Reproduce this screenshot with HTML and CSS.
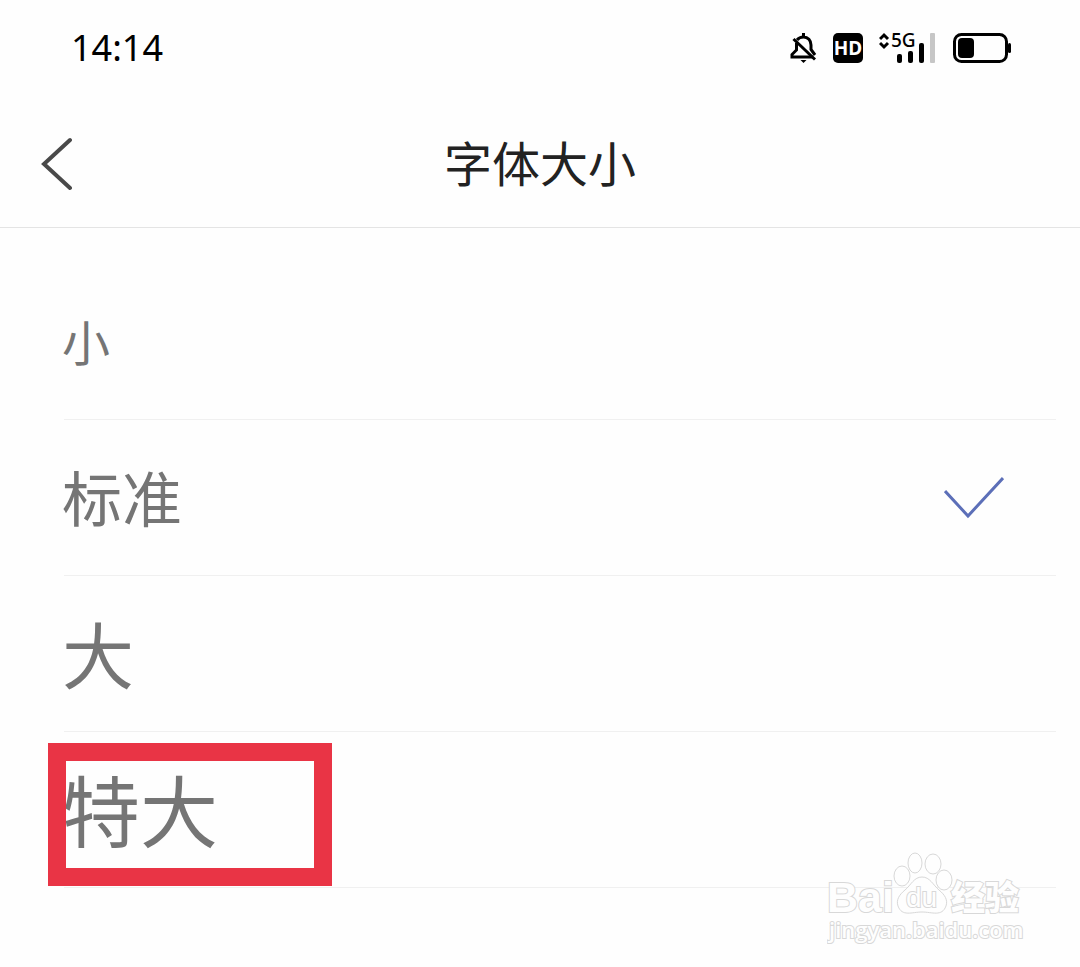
FILE: index.html
```html
<!DOCTYPE html>
<html lang="zh-CN">
<head>
<meta charset="utf-8">
<meta name="viewport" content="width=device-width, initial-scale=1">
<title>字体大小</title>
<link rel="stylesheet" href="styles.css">
</head>
<body>
<div class="status-bar">
  <time class="clock">14:14</time>
  <div class="status-icons">
    <svg class="icon-bell" width="28" height="32" viewBox="0 0 28 32" fill="none" stroke="#000" stroke-width="3" aria-hidden="true">
      <path d="M8 8C10 5.500 12 5 14.500 5C19 5 22 8.500 22 13V17.500L26 23M7.500 11V18L3 22.500V25H24M14.500 1V6"/>
      <path d="M4.500 7L26 27.500"/>
      <path d="M11.500 28H17.500L14.500 31Z" fill="#000" stroke="none"/>
    </svg>
    <svg class="icon-hd" width="30" height="30" viewBox="0 0 30 30" role="img" aria-label="HD">
      <rect width="30" height="30" rx="5"/>
      <text class="hd-text" x="15" y="22" text-anchor="middle">HD</text>
    </svg>
    <svg class="icon-signal" width="58" height="40" viewBox="0 -4 58 40" aria-label="5G" role="img">
      <path d="M1 7L5 3L9 7M1 11L5 15L9 11" fill="none" stroke="#000" stroke-width="3"/>
      <text class="network-text" x="12" y="15">5G</text>
      <rect x="18" y="22" width="5" height="9" rx="2"/>
      <rect x="29" y="19" width="5" height="12" rx="2"/>
      <rect x="40" y="11" width="5" height="20" rx="2"/>
      <rect x="51" y="1" width="5" height="30" rx="1" fill="#c6c6c6"/>
    </svg>
    <svg class="icon-battery" width="59" height="30" viewBox="0 0 59 30" aria-hidden="true">
      <rect x="1.500" y="1.500" width="52" height="27" rx="7" fill="none" stroke="#000" stroke-width="3"/>
      <rect x="5" y="5" width="16" height="20" rx="4"/>
      <rect x="55" y="10" width="3" height="10" rx="1.500"/>
    </svg>
  </div>
</div>

<header class="nav-bar">
  <button class="back" type="button" aria-label="返回">
    <svg width="32" height="54" viewBox="0 0 32 54" fill="none" stroke="#494949" stroke-width="4" stroke-linecap="round" aria-hidden="true">
      <path d="M30 3L4 27L30 51"/>
    </svg>
  </button>
  <h1 class="title">字体大小</h1>
</header>

<main class="options">
  <label class="option option-small">
    <input class="choice" type="radio" name="font-size">
    <span class="option-name">小</span>
  </label>
  <label class="option option-standard">
    <input class="choice" type="radio" name="font-size" checked>
    <span class="option-name">标准</span>
    <svg class="check" width="60" height="44" viewBox="0 0 60 44" fill="none" stroke="#5c6fb8" stroke-width="3" aria-hidden="true">
      <path d="M1 15L24 40L59 2"/>
    </svg>
  </label>
  <label class="option option-large">
    <input class="choice" type="radio" name="font-size">
    <span class="option-name">大</span>
  </label>
  <label class="option option-huge">
    <input class="choice" type="radio" name="font-size">
    <span class="option-name">特大</span>
    <span class="highlight"></span>
  </label>
</main>

<svg class="watermark" width="200" height="104" viewBox="0 0 200 104" role="img" aria-label="Baidu 经验 jingyan.baidu.com">
  <g class="mark-shape">
    <ellipse cx="75" cy="29" rx="8" ry="10"/>
    <ellipse cx="88" cy="16" rx="7" ry="10"/>
    <ellipse cx="106" cy="17" rx="8" ry="10"/>
    <ellipse cx="117" cy="33" rx="8" ry="10"/>
    <path d="M95 30C87 30 84 38 78 43C72 48 69 53 71 59C75 70 85 65 95 65C105 65 115 70 119 59C121 53 118 48 112 43C106 38 103 30 95 30Z"/>
  </g>
  <text class="mark-text mark-bai" x="0" y="65">Bai</text>
  <text class="mark-text mark-du" x="79" y="60">du</text>
  <text class="mark-text mark-cn" x="124" y="63">经验</text>
  <text class="mark-text mark-url" x="2" y="91">jingyan.baidu.com</text>
</svg>
</body>
</html>
```
FILE: styles.css
```css
* {
  box-sizing: border-box;
}

body {
  margin: 0;
  position: relative;
  background: #fefefe;
  color: #222;
  font-family: "Noto Sans", "Noto Sans CJK SC", sans-serif;
}

.status-bar {
  display: flex;
  align-items: center;
  justify-content: space-between;
  height: 96px;
  padding: 0 68px 0 71px;
}

.clock {
  color: #000;
  font-size: 36px;
  line-height: 48px;
}

.status-icons {
  display: flex;
  align-items: center;
  gap: 16px;
}

.hd-text {
  fill: #fff;
  font: bold 19px "Noto Sans", sans-serif;
}

.network-text {
  font: 500 19px "Noto Sans", sans-serif;
}

.nav-bar {
  display: grid;
  grid-template-columns: 80px 1fr 80px;
  align-items: center;
  height: 132px;
  padding: 4px 40px 0;
  border-bottom: 1px solid #e4e4e4;
}

.back {
  display: flex;
  padding: 0;
  border: 0;
  background: none;
}

.title {
  margin: 0;
  padding-bottom: 6px;
  font-family: "Noto Sans CJK SC", sans-serif;
  font-size: 48px;
  font-weight: 400;
  line-height: 72px;
  text-align: center;
}

.options {
  padding: 36px 24px 80px 64px;
  color: #757575;
  font-family: "Noto Sans CJK SC", sans-serif;
}

.option {
  position: relative;
  display: flex;
  align-items: center;
  justify-content: space-between;
  height: 156px;
  padding-right: 52px;
  border-bottom: 1px solid #f0f0f0;
}

.option-name {
  margin-left: -2px;
  padding-bottom: 4px;
}

.choice {
  position: absolute;
  margin: 0;
  opacity: 0;
}

.option-small {
  font-size: 48px;
}

.option-standard {
  font-size: 60px;
}

.option-large {
  font-size: 72px;
}

.option-huge {
  font-size: 78px;
}

.highlight {
  position: absolute;
  top: 11px;
  left: -16px;
  width: 284px;
  height: 143px;
  border: 18px solid #e93445;
}

.watermark {
  position: absolute;
  top: 847px;
  right: 53px;
}

.mark-shape,
.mark-text {
  fill: #fefefe;
  stroke: #d8d8d8;
  stroke-width: 1px;
}

.mark-text {
  stroke-width: 2px;
  paint-order: stroke;
}

.mark-bai {
  font: bold 43px "Liberation Sans", sans-serif;
}

.mark-du {
  font: 28px "Liberation Sans", sans-serif;
}

.mark-cn {
  font: 900 34px "Noto Sans CJK SC", sans-serif;
}

.mark-url {
  font: 600 22px "Open Sans", sans-serif;
}
```
